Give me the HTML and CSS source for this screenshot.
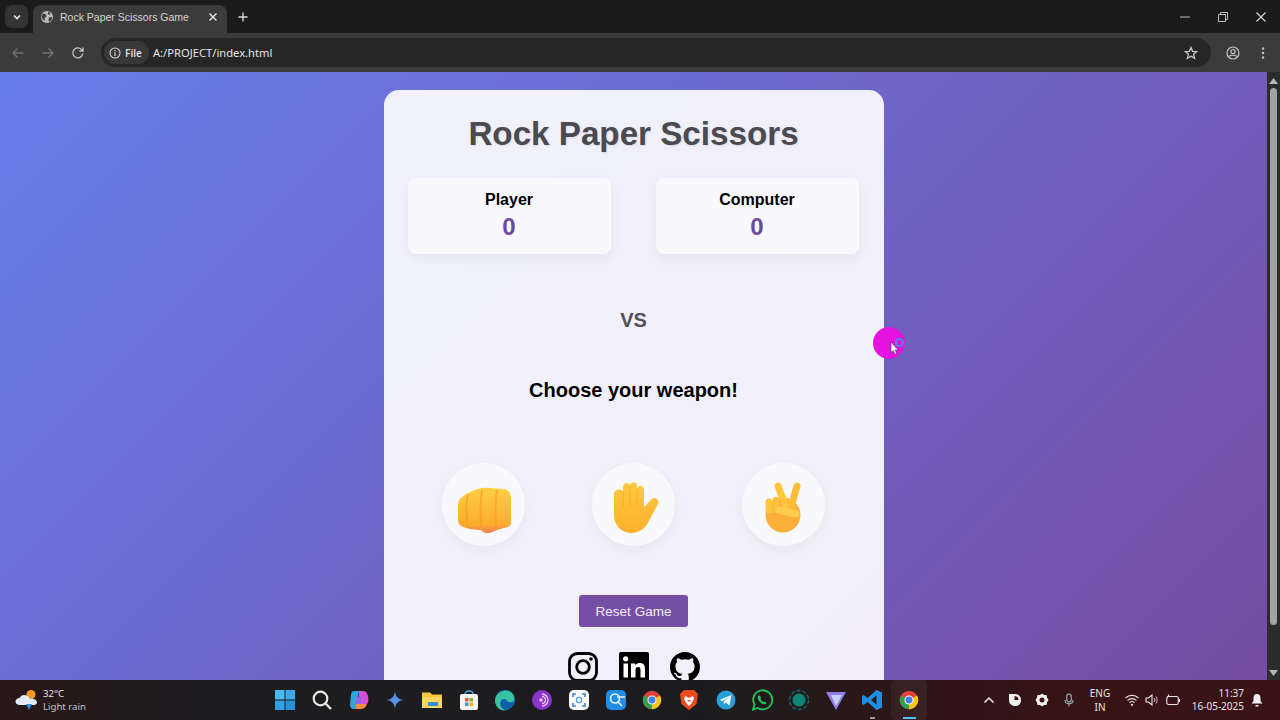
FILE: index.html
```html
<!DOCTYPE html>
<html lang="en">
<head>
<meta charset="utf-8">
<title>Rock Paper Scissors Game</title>
<link rel="stylesheet" href="styles.css">
</head>
<body>
<svg class="defs" width="0" height="0" aria-hidden="true">
  <defs>
    <linearGradient id="fist" x1="0" y1="0" x2="0" y2="1"><stop offset="0" stop-color="#ffcf45"/><stop offset=".82" stop-color="#fdaa2e"/><stop offset="1" stop-color="#ee7c62"/></linearGradient>
    <linearGradient id="palm" x1="0" y1="0" x2="0" y2="1"><stop offset="0" stop-color="#ffc93f"/><stop offset="1" stop-color="#fcb02e"/></linearGradient>
    <linearGradient id="copi" x1="0" y1="0" x2="1" y2="1"><stop offset="0" stop-color="#2ea6e8"/><stop offset=".5" stop-color="#c64fd8"/><stop offset="1" stop-color="#f08a40"/></linearGradient>
    <symbol id="chrome" viewBox="0 0 24 24">
      <circle cx="12" cy="12" r="10" fill="#e0423a"/>
      <path d="M12 12 L20.7 7 A10 10 0 0 1 12 22 Z" fill="#f5c518"/>
      <path d="M12 12 L12 22 A10 10 0 0 1 3.3 7 Z" fill="#34a14f"/>
      <circle cx="12" cy="12" r="5" fill="#f2f2f2"/>
      <circle cx="12" cy="12" r="3.8" fill="#3f7fe8"/>
    </symbol>
  </defs>
</svg>

<header class="tabstrip">
  <div class="tab-menu">
    <svg class="ic10" viewBox="0 0 10 10"><path d="M2 3.5 5 6.5 8 3.5" fill="none" stroke="#e6e6e6" stroke-width="1.7"/></svg>
  </div>
  <div class="tab">
    <svg class="ic14" viewBox="0 0 14 14"><circle cx="7" cy="7" r="6" fill="#b9b9b9"/><path d="M3 3.5 6 4.5 6.5 6.5 4.5 8 5 11 2.5 9 1.5 6ZM8 1.8 10.5 3 9.5 5 8 4ZM9 7.5 12 7 11.5 10 9.5 12 8.5 10Z" fill="#3b3b3b"/></svg>
    <span class="tab-title">Rock Paper Scissors Game</span>
    <svg class="ic10 tab-close" viewBox="0 0 10 10"><path d="M1.5 1.5 8.5 8.5M8.5 1.5 1.5 8.5" stroke="#e8e8e8" stroke-width="1.4"/></svg>
  </div>
  <svg class="ic10 new-tab" viewBox="0 0 10 10"><path d="M5 .5V9.5M.5 5H9.5" stroke="#e0e0e0" stroke-width="1.3"/></svg>
  <div class="win-btns">
    <svg class="ic10" viewBox="0 0 10 10"><path d="M0 5H10" stroke="#bdbdbd"/></svg>
    <svg class="ic10" viewBox="0 0 10 10"><path d="M.5 2.5H7.5V9.5H.5ZM2.5 2.5V.5H9.5V7.5H7.5" fill="none" stroke="#bdbdbd"/></svg>
    <svg class="ic10" viewBox="0 0 10 10"><path d="M.5 .5 9.5 9.5M9.5 .5 .5 9.5" stroke="#d8d8d8" stroke-width="1.1"/></svg>
  </div>
</header>

<nav class="toolbar">
  <svg class="ic14 nav-btn" viewBox="0 0 14 14"><path d="M12.5 7H2M6.5 2.5 2 7l4.5 4.5" fill="none" stroke="#717171" stroke-width="1.4"/></svg>
  <svg class="ic14 nav-btn" viewBox="0 0 14 14"><path d="M1.5 7H12M7.5 2.5 12 7l-4.5 4.5" fill="none" stroke="#717171" stroke-width="1.4"/></svg>
  <svg class="ic14 nav-btn" viewBox="0 0 14 14"><path d="M11.8 7.5A5 5 0 1 1 10.3 3.3L12 5M12 1.5V5H8.5" fill="none" stroke="#c4c4c4" stroke-width="1.3"/></svg>
  <div class="omnibox">
    <div class="chip">
      <svg class="ic12" viewBox="0 0 12 12"><circle cx="6" cy="6" r="5" fill="none" stroke="#d6d6d6" stroke-width="1.1"/><path d="M6 5.2V9M6 3V4.2" stroke="#d6d6d6" stroke-width="1.2"/></svg>
      <span>File</span>
    </div>
    <span class="url">A:/PROJECT/index.html</span>
    <svg class="ic14 star" viewBox="0 0 14 14"><path d="M7 1.5 8.6 5.3 12.7 5.6 9.6 8.3 10.6 12.3 7 10.2 3.4 12.3 4.4 8.3 1.3 5.6 5.4 5.3Z" fill="none" stroke="#c8c8c8" stroke-width="1.3"/></svg>
  </div>
  <svg class="ic14 profile" viewBox="0 0 14 14"><circle cx="7" cy="7" r="6" fill="none" stroke="#c4c4c4" stroke-width="1.2"/><circle cx="7" cy="5.6" r="2.1" fill="none" stroke="#c4c4c4" stroke-width="1.2"/><path d="M3 10.5C4.5 8.8 9.500 8.800 11 10.500" fill="none" stroke="#c4c4c4" stroke-width="1.2"/></svg>
  <svg class="ic14 kebab" viewBox="0 0 14 14"><circle cx="7" cy="2.500" r="1.200" fill="#c4c4c4"/><circle cx="7" cy="7" r="1.200" fill="#c4c4c4"/><circle cx="7" cy="11.500" r="1.200" fill="#c4c4c4"/></svg>
</nav>

<div class="viewport">
  <main class="page">
    <section class="card">
      <h1 class="title">Rock Paper Scissors</h1>
      <div class="scores">
        <div class="score">
          <h3 class="score-name">Player</h3>
          <p class="score-value">0</p>
        </div>
        <div class="score">
          <h3 class="score-name">Computer</h3>
          <p class="score-value">0</p>
        </div>
      </div>
      <div class="versus">VS</div>
      <p class="prompt">Choose your weapon!</p>
      <div class="choices">
        <button class="choice" aria-label="Rock">
          <svg class="hand" viewBox="0 0 56 56">
            <path d="M2 28C2 21 9 18 14 15 20 12 26 10 33 11L48 12C53 13 55 16 55 21V46C55 49 52 50 48 51L41 53C37 55 32 57 29 56 27 55 26 54 25 53 19 53 12 52 7 50 3 48 2 46 2 42Z" fill="url(#fist)"/>
            <path d="M12 17C10 24 10 38 12 50M26 13C24 24 24 42 26 53M41 13C39 24 39 42 41 52" fill="none" stroke="#f39c22" stroke-width="1.800" opacity=".7"/>
          </svg>
        </button>
        <button class="choice" aria-label="Paper">
          <svg class="hand" viewBox="0 0 56 56">
            <path d="M8 17C8 12 16 11 17 15V10C17 5 24 5 24 9 24 4 31 4 31 9V12C32 7 38 8 38 13V30L46 22C49 19 54 23 52 27L44 42C40 51 33 56 26 56 15 56 8 48 8 38Z" fill="url(#palm)"/>
            <path d="M17 14V30M24 9V29M31 11V29" fill="none" stroke="#f2a322" stroke-width="1" opacity=".7"/>
          </svg>
        </button>
        <button class="choice" aria-label="Scissors">
          <svg class="hand" viewBox="0 0 56 56">
            <circle cx="27" cy="38" r="17.500" fill="#fcb03a"/>
            <path d="M22 9 30 30" fill="none" stroke="#ffc53c" stroke-width="7" stroke-linecap="round"/>
            <path d="M41 9 35 30" fill="none" stroke="#fdbd36" stroke-width="7" stroke-linecap="round"/>
            <path d="M13 25V33" fill="none" stroke="#ffc53c" stroke-width="7" stroke-linecap="round"/>
            <path d="M20 23V33" fill="none" stroke="#fdc03a" stroke-width="6.500" stroke-linecap="round"/>
            <path d="M23 33 40 37" fill="none" stroke="#ffcd4c" stroke-width="7" stroke-linecap="round"/>
          </svg>
        </button>
      </div>
      <button class="reset">Reset Game</button>
      <div class="socials">
        <svg class="social" viewBox="0 0 30 30" aria-label="Instagram"><rect x="1.500" y="1.500" width="27" height="27" rx="8" fill="none" stroke="#000" stroke-width="2.800"/><circle cx="15" cy="15" r="6.300" fill="none" stroke="#000" stroke-width="2.800"/><circle cx="23" cy="7" r="1.800"/></svg>
        <svg class="social" viewBox="0 0 30 30" aria-label="LinkedIn"><rect width="30" height="30" rx="2"/><rect x="4.500" y="11.500" width="4.500" height="14" fill="#fff"/><circle cx="6.700" cy="6.800" r="2.600" fill="#fff"/><path d="M12 11.500H16.300V13.500C17.500 11.500 19.300 11 21 11 24.500 11 26 13.200 26 17V25.500H21.500V18C21.500 16 21 15 19.200 15 17.300 15 16.500 16.200 16.500 18V25.500H12Z" fill="#fff"/></svg>
        <svg class="social" viewBox="0 0 24 24" aria-label="GitHub"><path d="M12 0C5.370 0 0 5.370 0 12c0 5.300 3.440 9.800 8.210 11.390.6.110.82-.26.82-.58v-2.030c-3.340.73-4.040-1.610-4.040-1.610-.55-1.390-1.340-1.760-1.340-1.760-1.090-.75.080-.73.080-.73 1.210.08 1.840 1.240 1.840 1.240 1.070 1.840 2.810 1.310 3.500 1 .11-.78.420-1.310.76-1.610-2.670-.3-5.470-1.330-5.470-5.930 0-1.310.47-2.380 1.240-3.220-.13-.3-.54-1.520.11-3.180 0 0 1.010-.32 3.300 1.230a11.500 11.500 0 0 1 6 0c2.290-1.550 3.300-1.230 3.300-1.230.65 1.660.24 2.880.12 3.180.77.840 1.230 1.910 1.230 3.220 0 4.610-2.800 5.620-5.480 5.920.43.370.82 1.100.82 2.220v3.290c0 .32.220.7.830.58A12 12 0 0 0 24 12c0-6.630-5.370-12-12-12Z"/></svg>
      </div>
    </section>
  </main>
  <div class="scrollbar">
    <svg class="sb-arrow" viewBox="0 0 9 6"><path d="M4.500 0 9 6H0Z" fill="#b5b5b5"/></svg>
    <div class="sb-thumb"></div>
    <svg class="sb-arrow sb-down" viewBox="0 0 9 6"><path d="M4.500 6 9 0H0Z" fill="#b5b5b5"/></svg>
  </div>
  <div class="cursor-halo">
    <span class="cursor-ring"></span>
    <svg class="cursor-arrow" viewBox="0 0 9 13"><path d="M1 0V10.500L3.300 8.500 5 12.500 6.800 11.700 5.200 8H8.200Z" fill="#fff" stroke="#222" stroke-width=".5"/></svg>
  </div>
</div>

<footer class="taskbar">
  <div class="weather">
    <svg class="ic24" viewBox="0 0 24 24"><circle cx="16" cy="6.500" r="4.500" fill="#f59a23"/><path d="M5 17C2 17 .5 15.300 .5 13.500 .5 11.500 2.500 10 4.500 10 6 7 9.500 6 12.500 8 14 9 15 10.500 15 11 18 10 22 11.500 22 14.500 22 16 20.500 17 19 17Z" fill="#e4ecfa"/><path d="M11 16H17L14 22Z" fill="#2f8fe8"/></svg>
    <div class="weather-text"><span>32°C</span><span class="weather-sub">Light rain</span></div>
  </div>
  <div class="apps">
    <div class="app"><svg class="ic22" viewBox="0 0 22 22"><rect x="1" y="1" width="9.500" height="9.500" fill="#47b8f0"/><rect x="11.500" y="1" width="9.500" height="9.500" fill="#3aa9ea"/><rect x="1" y="11.500" width="9.500" height="9.500" fill="#2f9fe6"/><rect x="11.500" y="11.500" width="9.500" height="9.500" fill="#2391dc"/></svg></div>
    <div class="app"><svg class="ic22" viewBox="0 0 22 22"><circle cx="9.500" cy="9.500" r="6.800" fill="none" stroke="#e8e8e8" stroke-width="2.200"/><path d="M14.500 14.500 20 20" stroke="#e8e8e8" stroke-width="2.400"/></svg></div>
    <div class="app"><svg class="ic22" viewBox="0 0 22 22"><path d="M6 2H11L9 20H6C3 20 2 18 2 15L3 6C3 4 4 2 6 2Z" fill="#2aa6d8"/><path d="M11 2H15C18 2 19 4 20 7 21 11 20 14 19 15H11Z" fill="#d64fdc"/><path d="M8 15H19C18 18 16 20 13 20H8Z" fill="#f08a40"/><path d="M8 8H13V15H8Z" fill="#8a68e0"/></svg></div>
    <div class="app"><svg class="ic22" viewBox="0 0 22 22"><path d="M11 2C11.500 7.500 14.500 10.500 20 11 14.500 11.500 11.500 14.500 11 20 10.500 14.500 7.500 11.500 2 11 7.500 10.500 10.500 7.500 11 2Z" fill="#5a8fe8"/></svg></div>
    <div class="app"><svg class="ic22" viewBox="0 0 22 22"><path d="M1 3.500H9L11 5.500H21V19H1Z" fill="#f5c542"/><rect x="1" y="8" width="20" height="11" fill="#fbd85c"/><rect x="7" y="13" width="10" height="4" fill="#2f8fdc"/></svg></div>
    <div class="app"><svg class="ic22" viewBox="0 0 22 22"><rect x="2" y="5" width="18" height="16" rx="2" fill="#f4f4f4"/><path d="M7 5C7 1 15 1 15 5" fill="none" stroke="#4fb3e8" stroke-width="1.300"/><rect x="7" y="9" width="3.500" height="3.500" fill="#e8503a"/><rect x="11.500" y="9" width="3.500" height="3.500" fill="#7ab82e"/><rect x="7" y="13.500" width="3.500" height="3.500" fill="#2f9fe6"/><rect x="11.500" y="13.500" width="3.500" height="3.500" fill="#f5b800"/></svg></div>
    <div class="app"><svg class="ic22" viewBox="0 0 22 22"><circle cx="11" cy="11" r="10" fill="#1b7fc4"/><path d="M1 11C2 3 12 -1 18 4 21 7 21 11 18 13 15 14 10 13 11 10 7 10 5 14 8 18 10 20 13 20.500 15 20 8 24 1 19 1 11Z" fill="#37c4a0"/><path d="M21 12C20 17 16 20.500 11 21 7 20 5 15 7 12 9 9 13 10 13 12 15 14 19 14 21 12Z" fill="#0f5fa8"/></svg></div>
    <div class="app"><svg class="ic22" viewBox="0 0 22 22"><circle cx="11" cy="11" r="10" fill="#8a35c9"/><path d="M11 5A6 6 0 0 1 11 17M11 7.500A3.500 3.500 0 0 1 11 14.500" fill="none" stroke="#e6c8f7" stroke-width="1.300"/><circle cx="10" cy="11" r="1.800" fill="#e6c8f7"/></svg></div>
    <div class="app"><svg class="ic22" viewBox="0 0 22 22"><rect x="1" y="1" width="20" height="20" rx="5" fill="#fafafa"/><path d="M5 8V5H8M14 5H17V8M17 14V17H14M8 17H5V14" fill="none" stroke="#3f7fe8" stroke-width="1.600"/><circle cx="11" cy="11" r="2.600" fill="none" stroke="#5aa0e8" stroke-width="1.300"/></svg></div>
    <div class="app"><svg class="ic22" viewBox="0 0 22 22"><rect x="1" y="1" width="20" height="20" rx="5" fill="#1f8ee8"/><circle cx="10" cy="9.500" r="4.500" fill="none" stroke="#eaf4ff" stroke-width="1.600"/><path d="M13 13 17 17M12 8H20" stroke="#eaf4ff" stroke-width="1.600"/></svg></div>
    <div class="app"><svg class="ic22"><use href="#chrome"/></svg></div>
    <div class="app"><svg class="ic22" viewBox="0 0 22 22"><path d="M6 1H16L20 5 18.500 15 11 21 3.500 15 2 5Z" fill="#ee4a1f"/><path d="M7 7 11 9 15 7 16 10 13 15 11 17 9 15 6 10Z" fill="#fff"/><path d="M9 11H13L11 13Z" fill="#ee4a1f"/></svg></div>
    <div class="app"><svg class="ic22" viewBox="0 0 22 22"><circle cx="11" cy="11" r="9.500" fill="#2a9ed8"/><path d="M4.500 11 16.500 6 14.500 16.500 10.500 13.500 9 15.500 8.500 12.500 14 8 7.500 12Z" fill="#f0f8ff"/></svg></div>
    <div class="app"><svg class="ic22" viewBox="0 0 22 22"><path d="M2 20.500 3.500 15.500A9.500 9.500 0 1 1 6.800 18.900Z" fill="none" stroke="#22c45e" stroke-width="1.800"/><path d="M7.500 6.500C6 8 7 11 9 13 11 15 14 16 15.500 14.500L14 12.500 12.500 13C11.500 12.500 10 11 9.500 10L10 8.500 8.500 6.500Z" fill="#22c45e"/></svg></div>
    <div class="app"><svg class="ic22" viewBox="0 0 22 22"><circle cx="11" cy="11" r="9.500" fill="none" stroke="#0e6f68" stroke-width="1.400" stroke-dasharray="4 2"/><circle cx="11" cy="11" r="6.500" fill="#0f8478"/></svg></div>
    <div class="app"><svg class="ic22" viewBox="0 0 22 22"><path d="M1 3H21L11 21Z" fill="#8f7fe8"/><path d="M6 6H17L11 17Z" fill="#c8d0fa"/></svg></div>
    <div class="app"><svg class="ic22" viewBox="0 0 22 22"><path d="M15.500 1 21 3.500V18.500L15.500 21 6.500 13 2.800 16 1 15V7L2.800 6 6.500 9ZM15.500 6.500 10 11 15.500 15.500Z" fill="#1e8fe0"/></svg><span class="app-pip"></span></div>
    <div class="app app-active"><svg class="ic22"><use href="#chrome"/></svg><span class="app-bar"></span></div>
  </div>
  <div class="tray">
    <div class="tray-item w26"><svg class="ic12" viewBox="0 0 12 12"><path d="M1.500 8.500 6 4 10.500 8.500" fill="none" stroke="#e8e8e8" stroke-width="1.500"/></svg></div>
    <div class="tray-item w26"><svg class="ic14" viewBox="0 0 14 14"><path d="M1 1H7C11 1 13 4 13 7.500 13 11 10.500 13 7 13 3.500 13 1 10.500 1 7Z" fill="#f0f0f0"/><path d="M6.500 3V7H10.500A4 4 0 0 0 6.500 3Z" fill="#3a1418"/></svg></div>
    <div class="tray-item w27"><svg class="ic14" viewBox="0 0 14 14"><path d="M7 .5 9 2 11.500 2 12 4.500 13.500 7 12 9.500 11.500 12 9 12 7 13.500 5 12 2.500 12 2 9.500 .5 7 2 4.500 2.500 2 5 2Z" fill="#f0f0f0"/><circle cx="7" cy="7" r="2.500" fill="#3a1418"/></svg></div>
    <div class="tray-item w27"><svg class="ic14" viewBox="0 0 14 14"><rect x="4.800" y="1" width="4.400" height="8" rx="2.200" fill="none" stroke="#9fb7c4" stroke-width="1.100"/><path d="M3 7C3 12 11 12 11 7M7 10.500V13.500" fill="none" stroke="#9fb7c4" stroke-width="1.100"/></svg></div>
    <div class="lang"><span>ENG</span><span>IN</span></div>
    <div class="tray-item w22"><svg class="ic14" viewBox="0 0 14 14"><path d="M.5 5C4 1.500 10 1.500 13.500 5M2.500 7.300C5 5 9 5 11.500 7.300M4.500 9.500C6 8.300 8 8.300 9.500 9.500" fill="none" stroke="#e8e8e8" stroke-width="1.100"/><circle cx="7" cy="11.800" r="1.100" fill="#e8e8e8"/></svg></div>
    <div class="tray-item w18"><svg class="ic14" viewBox="0 0 14 14"><path d="M1 5H3.500L7 2V12L3.500 9H1Z" fill="none" stroke="#e8e8e8" stroke-width="1.100"/><path d="M9 5C10 6 10 8 9 9M11 3.500C12.500 5.500 12.500 8.500 11 10.500" fill="none" stroke="#c8c8c8"/></svg></div>
    <div class="tray-item w23"><svg class="ic14" viewBox="0 0 14 14"><rect x=".8" y="3.500" width="11.500" height="8" rx="1.800" fill="none" stroke="#e8e8e8" stroke-width="1.100"/><path d="M13.500 6V9M3 1.500 1.500 4.500" stroke="#e8e8e8" stroke-width="1.100"/></svg></div>
    <div class="clock"><span>11:37</span><span>16-05-2025</span></div>
    <div class="tray-item w26"><svg class="ic14" viewBox="0 0 14 14"><path d="M7 1C4.500 1 3.500 3 3.500 5V8L1.500 10.500H12.500L10.500 8V5C10.500 3 9.500 1 7 1Z" fill="#f0f0f0"/><path d="M5.500 12H8.500V13.500H5.500Z" fill="#f0f0f0"/></svg></div>
  </div>
</footer>
</body>
</html>
```

FILE: styles.css
```css
* { box-sizing: border-box; }
html, body { margin: 0; height: 100%; }
body {
  width: 1280px;
  height: 720px;
  overflow: hidden;
  display: flex;
  flex-direction: column;
  font-family: "Liberation Sans", Arial, sans-serif;
  background: #1c1c1c;
}
.defs { position: absolute; }
.ic10 { width: 10px; height: 10px; flex: none; }
.ic12 { width: 12px; height: 12px; flex: none; }
.ic14 { width: 14px; height: 14px; flex: none; }
.ic22 { width: 22px; height: 22px; flex: none; }
.ic24 { width: 24px; height: 24px; flex: none; }

/* browser chrome */
.tabstrip {
  height: 33px;
  flex: none;
  display: flex;
  align-items: flex-end;
  background: #1b1b1b;
  padding-left: 5px;
}
.tab-menu {
  width: 23px;
  height: 23px;
  margin: 0 5px 5px 0;
  display: flex;
  align-items: center;
  justify-content: center;
  background: #333;
  border-radius: 7px;
}
.tab {
  width: 194px;
  height: 28px;
  display: flex;
  align-items: center;
  padding: 0 9px 4px 7px;
  background: #3b3b3b;
  border-radius: 8px 8px 0 0;
}
.tab-title {
  margin-left: 6px;
  flex: 1;
  font-family: "Liberation Sans", sans-serif;
  font-size: 10.5px;
  color: #d4d4d4;
  white-space: nowrap;
}
.new-tab { margin: 0 0 11px 11px; }
.win-btns {
  margin-left: auto;
  align-self: center;
  display: flex;
  gap: 28px;
  padding-right: 14px;
}
.toolbar {
  height: 39px;
  flex: none;
  display: flex;
  align-items: center;
  background: #3b3b3b;
  padding-left: 11px;
}
.nav-btn { margin-right: 16px; }
.omnibox {
  width: 1110px;
  height: 29px;
  display: flex;
  align-items: center;
  padding: 0 13px 0 3px;
  background: #262626;
  border-radius: 15px;
  font-family: "Noto Sans", "Liberation Sans", sans-serif;
}
.chip {
  height: 23px;
  display: flex;
  align-items: center;
  gap: 4px;
  padding: 0 7px 0 5px;
  background: #383838;
  border-radius: 12px;
  font-size: 10px;
  font-weight: 600;
  color: #dcdcdc;
}
.url { margin-left: 4px; flex: 1; font-size: 11.2px; color: #e4e4e4; }
.profile { margin-left: 15px; }
.kebab { margin-left: 16px; }

/* viewport */
.viewport {
  flex: 1;
  min-height: 0;
  position: relative;
  display: flex;
  background: linear-gradient(135deg, #667eea 0%, #764ba2 100%);
}
.page {
  flex: 1;
  min-width: 0;
  overflow: hidden;
  display: flex;
  justify-content: center;
  align-items: flex-start;
  padding-top: 18px;
}
.card {
  width: 500px;
  flex: none;
  height: 640px;
  padding: 24px 24px 0;
  display: flex;
  flex-direction: column;
  align-items: center;
  background: rgba(255, 255, 255, 0.9);
  border-radius: 15px;
}
.title {
  margin: 0 0 24px;
  height: 40px;
  font-size: 33.2px;
  line-height: 40px;
  font-weight: 700;
  color: #4a4a50;
  text-shadow: 1px 1px 2px rgba(0, 0, 0, 0.1);
}
.scores {
  display: grid;
  grid-template-columns: 203px 203px;
  column-gap: 45px;
  width: 100%;
}
.score {
  height: 76px;
  padding-top: 13px;
  background: rgba(255, 255, 255, 0.6);
  border-radius: 8px;
  text-align: center;
  box-shadow: 0 4px 12px rgba(0, 0, 0, 0.05);
}
.score-name {
  margin: 0;
  font-size: 16px;
  line-height: 18px;
  font-weight: 700;
  color: #000;
}
.score-value {
  margin: 4px 0 0;
  font-size: 24px;
  line-height: 28px;
  font-weight: 700;
  color: #6a4c9c;
}
.versus {
  margin-top: 52px;
  height: 28px;
  font-size: 20px;
  line-height: 28px;
  font-weight: 700;
  color: #505056;
}
.prompt {
  margin: 44px 0 0;
  height: 24px;
  font-size: 20px;
  line-height: 24px;
  font-weight: 700;
  color: #000;
}
.choices {
  margin-top: 61px;
  display: flex;
  justify-content: center;
  gap: 67px;
}
.choice {
  width: 83px;
  height: 83px;
  padding: 0;
  border: 0;
  border-radius: 50%;
  display: flex;
  align-items: center;
  justify-content: center;
  background: rgba(255, 255, 255, 0.6);
  box-shadow: 0 4px 12px rgba(0, 0, 0, 0.04);
}
.hand { width: 56px; height: 56px; }
.reset {
  margin-top: 49px;
  width: 109px;
  height: 32px;
  padding: 0;
  border: 0;
  border-radius: 3px;
  background: #764ea5;
  color: #f4eefa;
  font-family: inherit;
  font-size: 13.5px;
}
.socials {
  margin-top: 25px;
  display: flex;
  gap: 21px;
}
.social { width: 30px; height: 30px; }

/* scrollbar */
.scrollbar {
  width: 13px;
  flex: none;
  position: relative;
  background: #2c2c2c;
}
.sb-arrow {
  position: absolute;
  left: 2px;
  top: 6px;
  width: 9px;
  height: 6px;
}
.sb-down { top: auto; bottom: 4px; }
.sb-thumb {
  position: absolute;
  left: 3px;
  top: 16px;
  width: 7px;
  height: 537px;
  border-radius: 4px;
  background: #a3a3a3;
}

/* cursor highlight */
.cursor-halo {
  position: absolute;
  left: 873px;
  top: 255px;
  width: 32px;
  height: 32px;
  border-radius: 50%;
  background: #e413df;
}
.cursor-ring {
  position: absolute;
  left: 22px;
  top: 11px;
  width: 9px;
  height: 9px;
  border-radius: 50%;
  border: 2px solid #5f7fe6;
}
.cursor-arrow {
  position: absolute;
  left: 17px;
  top: 15px;
  width: 9px;
  height: 13px;
}

/* taskbar */
.taskbar {
  height: 40px;
  flex: none;
  display: flex;
  align-items: center;
  color: #e6e6e6;
  font-family: "Noto Sans", "Liberation Sans", sans-serif;
  background: linear-gradient(90deg, #2a1618 0%, #1e1c1e 12%, #1c1c1e 55%, #331416 75%, #3c1216 100%);
}
.weather {
  width: 267px;
  flex: none;
  display: flex;
  align-items: center;
  gap: 4px;
  padding-left: 15px;
}
.weather-text {
  display: flex;
  flex-direction: column;
  font-size: 9.6px;
  line-height: 13px;
}
.weather-sub { color: #c4c4c4; }
.apps { display: flex; }
.app {
  width: 36.7px;
  height: 40px;
  position: relative;
  display: flex;
  align-items: center;
  justify-content: center;
}
.app-active { background: rgba(255, 255, 255, 0.05); border-radius: 4px; }
.app-pip {
  position: absolute;
  left: 16px;
  bottom: 1px;
  width: 5px;
  height: 2px;
  background: #9a9a9a;
}
.app-bar {
  position: absolute;
  left: 12px;
  bottom: 1px;
  width: 13px;
  height: 2px;
  background: #4cc2ff;
}
.tray {
  margin-left: auto;
  display: flex;
  align-items: center;
  height: 40px;
  padding-right: 10px;
}
.tray-item { display: flex; justify-content: center; align-items: center; }
.w18 { width: 18px; }
.w22 { width: 22px; }
.w23 { width: 23px; }
.w26 { width: 26px; }
.w27 { width: 27px; }
.lang {
  width: 36px;
  margin-right: 3px;
  display: flex;
  flex-direction: column;
  align-items: center;
  font-size: 10px;
  line-height: 14px;
}
.clock {
  width: 60px;
  display: flex;
  flex-direction: column;
  align-items: flex-end;
  font-size: 10px;
  line-height: 13px;
  white-space: nowrap;
}
```
